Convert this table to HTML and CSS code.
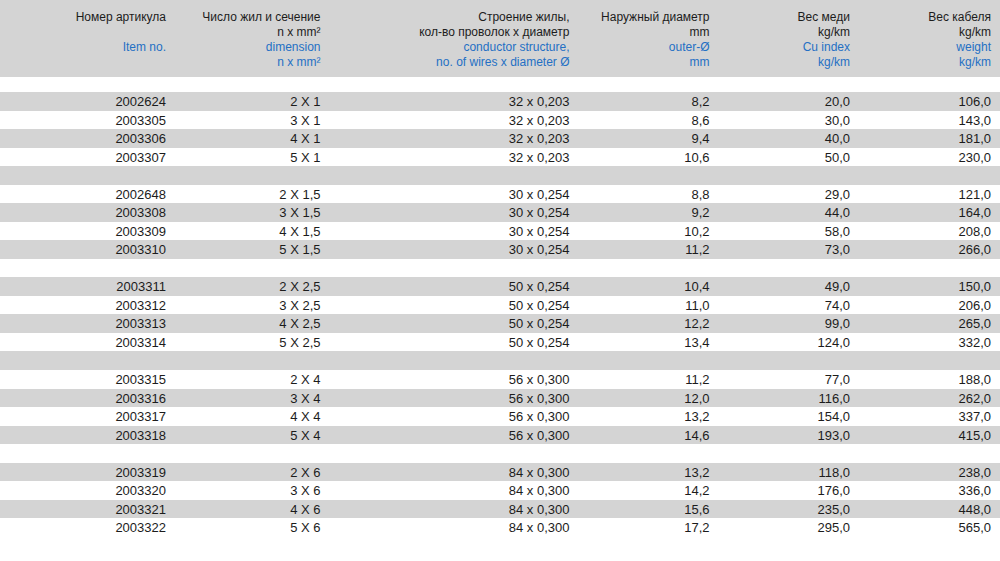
FILE: index.html
```html
<!DOCTYPE html>
<html lang="ru">
<head>
<meta charset="utf-8">
<title>Таблица кабелей</title>
<link rel="stylesheet" href="styles.css">
</head>
<body>
<div class="sheet">
  <div class="head">
    <div class="cell"><div>Номер артикула</div><div>&nbsp;</div><div class="en">Item no.</div><div>&nbsp;</div></div>
    <div class="cell"><div>Число жил и сечение</div><div>n x mm²</div><div class="en">dimension</div><div class="en">n x mm²</div></div>
    <div class="cell"><div>Строение жилы,</div><div>кол-во проволок х диаметр</div><div class="en">conductor structure,</div><div class="en">no. of wires x diameter Ø</div></div>
    <div class="cell"><div>Наружный диаметр</div><div>mm</div><div class="en">outer-Ø</div><div class="en">mm</div></div>
    <div class="cell"><div>Вес меди</div><div>kg/km</div><div class="en">Cu index</div><div class="en">kg/km</div></div>
    <div class="cell"><div>Вес кабеля</div><div>kg/km</div><div class="en">weight</div><div class="en">kg/km</div></div>
  </div>
  <div class="spacer"></div>
  <div class="rows">
    <div class="row"><span>2002624</span><span>2 X 1</span><span>32 x 0,203</span><span>8,2</span><span>20,0</span><span>106,0</span></div>
    <div class="row"><span>2003305</span><span>3 X 1</span><span>32 x 0,203</span><span>8,6</span><span>30,0</span><span>143,0</span></div>
    <div class="row"><span>2003306</span><span>4 X 1</span><span>32 x 0,203</span><span>9,4</span><span>40,0</span><span>181,0</span></div>
    <div class="row"><span>2003307</span><span>5 X 1</span><span>32 x 0,203</span><span>10,6</span><span>50,0</span><span>230,0</span></div>
    <div class="row"></div>
    <div class="row"><span>2002648</span><span>2 X 1,5</span><span>30 x 0,254</span><span>8,8</span><span>29,0</span><span>121,0</span></div>
    <div class="row"><span>2003308</span><span>3 X 1,5</span><span>30 x 0,254</span><span>9,2</span><span>44,0</span><span>164,0</span></div>
    <div class="row"><span>2003309</span><span>4 X 1,5</span><span>30 x 0,254</span><span>10,2</span><span>58,0</span><span>208,0</span></div>
    <div class="row"><span>2003310</span><span>5 X 1,5</span><span>30 x 0,254</span><span>11,2</span><span>73,0</span><span>266,0</span></div>
    <div class="row"></div>
    <div class="row"><span>2003311</span><span>2 X 2,5</span><span>50 x 0,254</span><span>10,4</span><span>49,0</span><span>150,0</span></div>
    <div class="row"><span>2003312</span><span>3 X 2,5</span><span>50 x 0,254</span><span>11,0</span><span>74,0</span><span>206,0</span></div>
    <div class="row"><span>2003313</span><span>4 X 2,5</span><span>50 x 0,254</span><span>12,2</span><span>99,0</span><span>265,0</span></div>
    <div class="row"><span>2003314</span><span>5 X 2,5</span><span>50 x 0,254</span><span>13,4</span><span>124,0</span><span>332,0</span></div>
    <div class="row"></div>
    <div class="row"><span>2003315</span><span>2 X 4</span><span>56 x 0,300</span><span>11,2</span><span>77,0</span><span>188,0</span></div>
    <div class="row"><span>2003316</span><span>3 X 4</span><span>56 x 0,300</span><span>12,0</span><span>116,0</span><span>262,0</span></div>
    <div class="row"><span>2003317</span><span>4 X 4</span><span>56 x 0,300</span><span>13,2</span><span>154,0</span><span>337,0</span></div>
    <div class="row"><span>2003318</span><span>5 X 4</span><span>56 x 0,300</span><span>14,6</span><span>193,0</span><span>415,0</span></div>
    <div class="row"></div>
    <div class="row"><span>2003319</span><span>2 X 6</span><span>84 x 0,300</span><span>13,2</span><span>118,0</span><span>238,0</span></div>
    <div class="row"><span>2003320</span><span>3 X 6</span><span>84 x 0,300</span><span>14,2</span><span>176,0</span><span>336,0</span></div>
    <div class="row"><span>2003321</span><span>4 X 6</span><span>84 x 0,300</span><span>15,6</span><span>235,0</span><span>448,0</span></div>
    <div class="row"><span>2003322</span><span>5 X 6</span><span>84 x 0,300</span><span>17,2</span><span>295,0</span><span>565,0</span></div>
  </div>
</div>
</body>
</html>
```
FILE: styles.css
```css
html, body {
  margin: 0;
  padding: 0;
  background: #ffffff;
}
body {
  font-family: "Liberation Sans", Arial, sans-serif;
  font-size: 13px;
  color: #1c1c1c;
}
.sheet {
  width: 1000px;
}
.head,
.row {
  display: grid;
  grid-template-columns: 166px 154.5px 249px 140px 140.5px 141px;
  text-align: right;
}
.head {
  background: #d4d4d4;
  padding: 9.5px 0 7px;
  font-size: 12px;
  line-height: 15px;
}
.en {
  color: #2470c4;
}
.spacer {
  height: 15.5px;
}
.row {
  height: 18.54px;
  line-height: 19.5px;
}
.row:nth-child(odd) {
  background: #d4d4d4;
}
.row span {
  white-space: nowrap;
}
```
